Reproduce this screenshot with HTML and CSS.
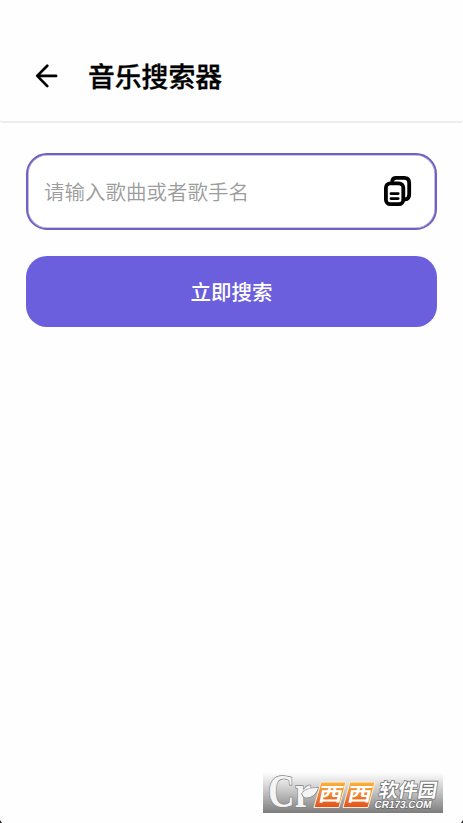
FILE: index.html
```html
<!DOCTYPE html>
<html lang="zh-CN">
<head>
<meta charset="utf-8">
<title>音乐搜索器</title>
<link rel="stylesheet" href="styles.css">
</head>
<body>
<div class="screen">
  <header class="topbar">
    <svg class="back" width="24" height="26" viewBox="0 0 24 26" fill="none" stroke="#000" stroke-width="2.7" stroke-linecap="round" stroke-linejoin="round"><path d="M12.3 2.7 2.2 12.9l10.1 10.2M2.5 12.9h18.6"/></svg>
    <h1 class="title">音乐搜索器</h1>
  </header>
  <main class="content">
    <div class="field">
      <span class="placeholder">请输入歌曲或者歌手名</span>
      <svg class="copy" width="28" height="32" viewBox="0 0 28 32" fill="none" stroke="#000" stroke-width="3.8" stroke-linecap="round" stroke-linejoin="round"><path d="M8.2 6.4C8.4 3.8 10 2.8 12.2 2.8h8c3.4 0 5 1.8 5 5.2v11.5c0 3-1.2 4.6-4 4.9"/><rect x="1.9" y="8.4" width="17.4" height="20.8" rx="4.4"/><path d="M7 18.6h7.2M7 23.6h7.2" stroke-width="2.8"/></svg>
    </div>
    <div class="button">立即搜索</div>
  </main>
  <svg class="watermark" width="180" height="40" viewBox="0 0 180 40">
    <defs>
      <linearGradient id="band" x1="0" y1="0" x2="0" y2="1"><stop offset="0" stop-color="#fdfdfd"/><stop offset=".5" stop-color="#c0c0c0"/><stop offset="1" stop-color="#7c7c7c"/></linearGradient>
      <linearGradient id="tile" x1="0" y1="0" x2="0" y2="1"><stop offset="0" stop-color="#f8b43c"/><stop offset="1" stop-color="#e4501c"/></linearGradient>
    </defs>
    <rect width="180" height="40" fill="url(#band)"/>
    <g class="mark">
      <text x="5" y="34" textLength="43" lengthAdjust="spacingAndGlyphs">Cr</text>
      <path d="M39 21c2-5 8-6 16-6-2 7-8 11-14 9z"/>
    </g>
    <g fill="url(#tile)" stroke="#fff0dc" stroke-width="1"><path d="M58 9h25l-7 25.5H51z"/><path d="M87 9h25l-7 25.5H80z"/></g>
    <g class="tile-text">
      <text transform="translate(54.5 28) skewX(-12) scale(1.28 1)">西</text>
      <text transform="translate(83.5 28) skewX(-12) scale(1.28 1)">西</text>
    </g>
    <text class="site-name" transform="translate(115 23.5) skewX(-10)" textLength="58" lengthAdjust="spacingAndGlyphs">软件园</text>
    <text class="site-url" transform="translate(111 34.5) skewX(-10)" textLength="57" lengthAdjust="spacingAndGlyphs">CR173.COM</text>
  </svg>
  <i class="corner corner-left"></i>
  <i class="corner corner-right"></i>
</div>
</body>
</html>
```
FILE: styles.css
```css
* { box-sizing: border-box; }
body { margin: 0; background: #fefefe; font-family: "Noto Sans CJK SC", sans-serif; }
.screen { position: relative; height: 823px; overflow: hidden; padding-top: 31px; }
.topbar { display: flex; align-items: center; height: 92px; padding-left: 35px; border-bottom: 2px solid #ededed; border-radius: 3px; }
.back { margin-right: 29px; }
.title { margin: 0; font-size: 26.8px; line-height: 40px; font-weight: 500; color: #000; -webkit-text-stroke: .35px #000; }
.content { padding: 30px 26px 0; }
.field { display: flex; align-items: center; justify-content: space-between; height: 77px; padding: 0 23px 2px 16px; border: 2px solid #6f61bd; box-shadow: inset 0 0 0 .6px #9d92d6; border-radius: 21px; background: #fff; }
.placeholder { font-size: 20.5px; line-height: 30px; font-weight: 350; color: #9c9c9c; }
.button { margin-top: 26px; height: 71px; border-radius: 21px; background: #6c5fdd; color: #fff; font-size: 20.5px; font-weight: 500; line-height: 71px; text-align: center; }
.watermark { position: absolute; left: 263px; top: 773px; overflow: visible; }
.mark { fill: #f4f4f4; stroke: #858585; stroke-width: 1.6; paint-order: stroke; font-family: "Liberation Serif", serif; font-size: 46px; font-weight: 700; }
.tile-text { fill: #fff; font-size: 19px; font-weight: 700; }
.site-name { font-size: 19px; font-weight: 700; fill: #fff; stroke: #777; stroke-width: 1.6; paint-order: stroke; }
.site-url { font-family: "Liberation Sans", sans-serif; font-size: 10.5px; font-weight: 700; fill: #fff; stroke: #686868; stroke-width: 1.4; paint-order: stroke; }
.corner { position: absolute; bottom: 0; width: 2px; height: 3px; background: #222; }
.corner-left { left: 0; clip-path: polygon(0 0, 100% 100%, 0 100%); }
.corner-right { right: 0; clip-path: polygon(100% 0, 100% 100%, 0 100%); }
```
